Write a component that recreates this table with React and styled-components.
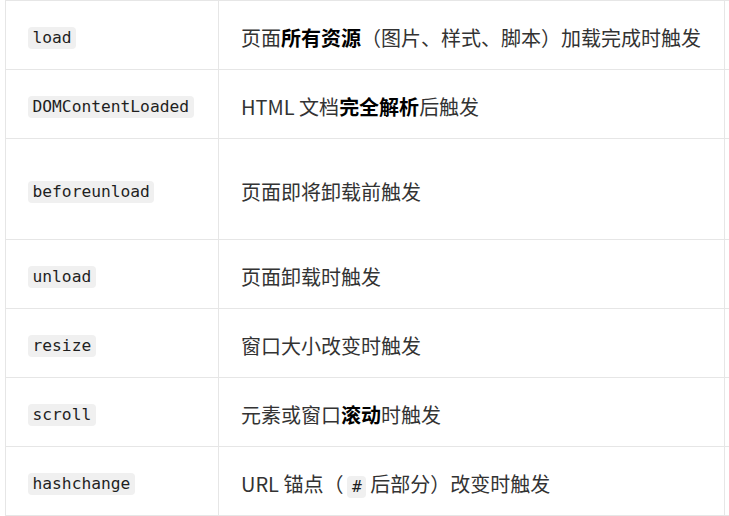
import React from "react";
import styled, { createGlobalStyle } from "styled-components";

const Global = createGlobalStyle`
  html, body { margin: 0; padding: 0; background: #ffffff; }
  body {
    width: 729px;
    height: 516px;
    overflow: hidden;
    font-family: "Noto Sans CJK SC", "Noto Sans", sans-serif;
    color: #333333;
  }
`;

const Table = styled.div`
  display: flex;
  flex-direction: column;
  margin-left: 5px;
  width: 724px;
  box-sizing: border-box;
  border-left: 1px solid #e6e6e6;
  border-top: 1px solid #e6e6e6;
`;

const Row = styled.div`
  display: grid;
  grid-template-columns: 213px 506px minmax(0, 1fr);
  height: ${(p) => (p.$tall ? 101 : 69)}px;
`;

const Cell = styled.div`
  display: flex;
  align-items: center;
  padding: 6px 22px 0;
  border-right: 1px solid #e6e6e6;
  border-bottom: 1px solid #e6e6e6;
  font-size: 20px;
  line-height: 32px;
  white-space: nowrap;
  color: #333333;
`;

const SpareCell = styled.div`
  border-bottom: 1px solid #e6e6e6;
`;

const Code = styled.code`
  display: inline-block;
  font-family: "DejaVu Sans Mono", "Liberation Mono", monospace;
  font-size: 16.25px;
  line-height: 22px;
  padding: 0 4.5px;
  margin: ${(p) => (p.$inline ? "0 4px" : "0")};
  background: #f0f0f0;
  border-radius: 4px;
  color: #1f1f1f;
`;

const Strong = styled.strong`
  font-weight: 700;
  color: #000000;
`;

const rows = [
  {
    code: "load",
    desc: (
      <>
        页面<Strong>所有资源</Strong>（图片、样式、脚本）加载完成时触发
      </>
    ),
  },
  {
    code: "DOMContentLoaded",
    desc: (
      <>
        HTML 文档<Strong>完全解析</Strong>后触发
      </>
    ),
  },
  { code: "beforeunload", desc: <>页面即将卸载前触发</>, tall: true },
  { code: "unload", desc: <>页面卸载时触发</> },
  { code: "resize", desc: <>窗口大小改变时触发</> },
  {
    code: "scroll",
    desc: (
      <>
        元素或窗口<Strong>滚动</Strong>时触发
      </>
    ),
  },
  {
    code: "hashchange",
    desc: (
      <>
        URL 锚点（<Code $inline>#</Code>后部分）改变时触发
      </>
    ),
  },
];

export default function App() {
  return (
    <>
      <Global />
      <Table>
        {rows.map((r) => (
          <Row key={r.code} $tall={r.tall}>
            <Cell>
              <Code>{r.code}</Code>
            </Cell>
            <Cell>
              <span>{r.desc}</span>
            </Cell>
            <SpareCell />
          </Row>
        ))}
      </Table>
    </>
  );
}
